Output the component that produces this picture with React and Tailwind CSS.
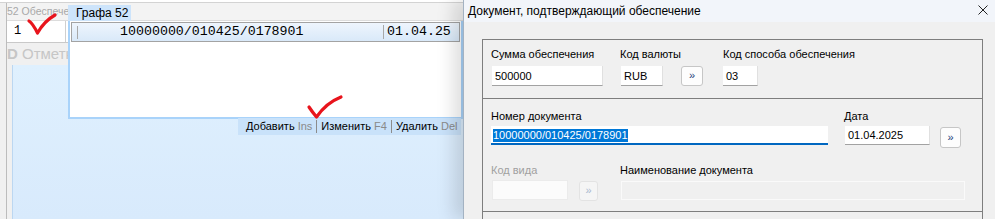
function Field({ className = "", children }) {
  return (
    <div
      className={
        "bg-white border-b border-r border-b-[#a2a2a2] border-r-[#e0e0e0] pl-[3px] text-[11px] text-black whitespace-nowrap " +
        className
      }
    >
      {children}
    </div>
  );
}

function Btn({ disabled = false, className = "" }) {
  return (
    <div
      className={
        "flex items-center justify-center rounded-[3px] border text-[11px] leading-none pb-[1px] " +
        (disabled
          ? "border-[#e3e3e3] bg-[#f5f5f5] text-[#a9b8cf] "
          : "border-[#c6c6c6] bg-[#fdfdfd] text-[#23407a] ") +
        className
      }
    >
      »
    </div>
  );
}

export default function App() {
  return (
    <div className="relative w-[995px] h-[219px] overflow-hidden flex bg-[#f0f0f0] font-['Liberation_Sans',Arial,sans-serif] text-black">
      {/* background application */}
      <div className="relative w-[463px] shrink-0 flex flex-col">
        <div className="h-[3px] bg-white border-b border-[#d3d3d3]" />
        <div className="flex-1 flex">
          <div className="w-[6px] bg-[#f0f0f0]" />
          <div className="flex-1 flex flex-col border-l border-[#bcbcbc]">
            <div className="h-[18px] bg-[#f3f3f3] border-b border-[#dcdcdc]">
              <div className="w-[61px] overflow-hidden text-[10.5px] leading-[17px] text-[#a9a9a9] whitespace-nowrap">
                52 Обеспечение
              </div>
            </div>
            <div className="h-[22px] flex bg-white border-b border-[#c9c9c9]">
              <div className="w-[59px] border-r border-[#cfcfcf] pl-[7px] font-['Liberation_Mono',monospace] text-[12px] leading-[21px]">
                1
              </div>
            </div>
            <div className="h-[22px] flex items-center">
              <div className="w-[61px] overflow-hidden text-[15px] text-[#c6c6c6] whitespace-nowrap">
                <span className="font-bold">D</span>
                <span>&nbsp;Отметки</span>
              </div>
            </div>
            <div className="flex-1 ml-[5px] border-l border-[#bcd7f1] bg-gradient-to-b from-[#dff0fe] to-[#d8eafc]" />
          </div>
        </div>

        {/* popup "Графа 52" */}
        <div className="absolute left-[68px] top-[5px] w-[395px] flex flex-col">
          <div className="w-[63px] h-[16px] bg-[#cde4fb] pl-[8px] text-[12px] leading-[16px] whitespace-nowrap">
            Графа 52
          </div>
          <div className="h-[98px] bg-white border-x-2 border-b-2 border-[#a9d3fa] pt-[1px] px-[1px]">
            <div className="h-[20px] flex items-center border border-[#a3a3a3] bg-gradient-to-b from-[#eef5fd] to-[#d9e9f9] font-['Liberation_Mono',monospace] text-[13.3px] whitespace-nowrap">
              <div className="w-[5px]" />
              <div className="w-px h-[13px] bg-[#a8a8a8]" />
              <div className="w-[305px] pl-[42px]">10000000/010425/0178901</div>
              <div className="w-px h-[14px] bg-[#a8a8a8]" />
              <div className="pl-[3px]">01.04.25</div>
            </div>
          </div>
        </div>

        {/* toolbar */}
        <div className="absolute left-[238px] top-[118px] w-[223px] h-[17px] bg-[#c9e2fa] flex items-center pl-[8px] text-[11px] whitespace-nowrap">
          <span>
            Добавить <span className="text-[#8a8a8a]">Ins</span>
          </span>
          <div className="mx-[4px] w-px h-[13px] bg-[#8c8c8c]" />
          <span>
            Изменить <span className="text-[#8a8a8a]">F4</span>
          </span>
          <div className="mx-[4px] w-px h-[13px] bg-[#8c8c8c]" />
          <span>
            Удалить <span className="text-[#8a8a8a]">Del</span>
          </span>
        </div>
      </div>

      {/* dialog */}
      <div className="relative z-10 flex-1 flex flex-col border-l border-[#a3b2c2] shadow-[-10px_0_16px_rgba(0,0,0,0.13)] bg-[#f0f0f0]">
        <div className="h-[22px] shrink-0 bg-[#f2f5fa] flex items-start justify-between pl-[4px] pr-[7px]">
          <span className="pt-[3px] text-[12px] leading-[16px] whitespace-nowrap">
            Документ, подтверждающий обеспечение
          </span>
          <svg className="mt-[5px]" width="10" height="10" viewBox="0 0 10 10">
            <path d="M0.5 0.5L9.5 9.5M9.5 0.5L0.5 9.5" stroke="#222" strokeWidth="1" fill="none" />
          </svg>
        </div>
        <div className="flex-1 pt-[17px] pl-[18px] pr-[12px]">
          <div className="h-full border-t border-x border-[#7e7e7e] flex flex-col">
            {/* section 1 */}
            <div className="h-[59px] shrink-0 border-b border-[#7e7e7e] pl-[8px] pt-[6px] flex text-[11px] leading-[16px]">
              <div className="w-[112px] flex flex-col">
                <div className="whitespace-nowrap">Сумма обеспечения</div>
                <Field className="mt-[4px] ml-[1px] w-[111px] h-[20px] leading-[20px]">500000</Field>
              </div>
              <div className="ml-[17px] flex flex-col">
                <div className="whitespace-nowrap">Код валюты</div>
                <div className="mt-[4px] flex">
                  <Field className="ml-[1px] w-[42px] h-[20px] leading-[20px]">RUB</Field>
                  <Btn className="ml-[18px] w-[22px] h-[20px]" />
                </div>
              </div>
              <div className="ml-[20px] flex flex-col">
                <div className="whitespace-nowrap">Код способа обеспечения</div>
                <Field className="mt-[4px] w-[35px] h-[20px] leading-[20px]">03</Field>
              </div>
            </div>

            {/* section 2 */}
            <div className="h-[113px] shrink-0 border-b border-[#7e7e7e] pl-[8px] pt-[9px] text-[11px] leading-[16px]">
              <div className="flex">
                <div className="flex flex-col">
                  <div className="whitespace-nowrap">Номер документа</div>
                  <div className="mt-[2px] w-[337px] h-[19px] bg-white border-b-2 border-[#0067c0] pl-[2px] pt-[3px]">
                    <span className="inline-block align-top bg-[#0078d7] text-white leading-[13px] whitespace-nowrap">
                      10000000/010425/0178901
                    </span>
                  </div>
                </div>
                <div className="ml-[16px] flex flex-col">
                  <div className="whitespace-nowrap">Дата</div>
                  <div className="mt-[2px] flex items-start">
                    <Field className="ml-[1px] w-[85px] h-[19px] leading-[19px]">01.04.2025</Field>
                    <Btn className="ml-[10px] mt-[1px] w-[21px] h-[21px]" />
                  </div>
                </div>
              </div>
              <div className="mt-[14px] flex">
                <div className="flex flex-col">
                  <div className="whitespace-nowrap text-[#a0a0a0]">Код вида</div>
                  <div className="mt-[2px] flex items-start">
                    <div className="ml-[1px] w-[76px] h-[20px] bg-[#fbfbfb] border border-[#ebebeb]" />
                    <Btn disabled className="ml-[11px] mt-[1px] w-[19px] h-[20px]" />
                  </div>
                </div>
                <div className="ml-[22px] flex flex-col">
                  <div className="whitespace-nowrap">Наименование документа</div>
                  <div className="mt-[3px] ml-[1px] w-[344px] h-[19px] border border-[#fafafa] bg-[#f0f0f0]" />
                </div>
              </div>
            </div>
            <div className="flex-1" />
          </div>
        </div>
      </div>

      {/* red hand-drawn check marks */}
      <svg className="absolute left-0 top-0 z-20 pointer-events-none" width="995" height="219" viewBox="0 0 995 219">
        <path
          d="M29 21 C32 23 35 28 37.5 33 C42 25 48 19 55 15"
          stroke="#e8141c"
          strokeWidth="3.2"
          fill="none"
          strokeLinecap="round"
          strokeLinejoin="round"
        />
        <path
          d="M309 107 C311 110 314 114 316.5 117 C322 109 331 101 341 97"
          stroke="#e8141c"
          strokeWidth="3.2"
          fill="none"
          strokeLinecap="round"
          strokeLinejoin="round"
        />
      </svg>
    </div>
  );
}
